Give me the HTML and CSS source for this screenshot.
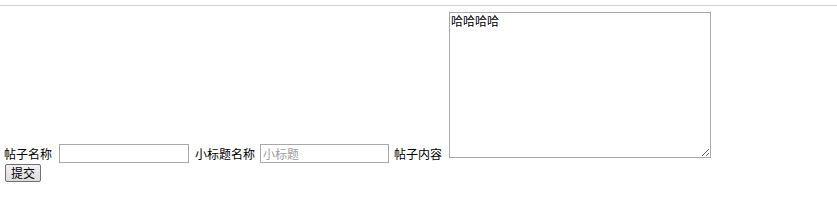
FILE: index.html
```html
<!DOCTYPE html>
<html lang="zh">
<head>
<meta charset="utf-8">
<title>发帖</title>
<link rel="stylesheet" href="styles.css">
</head>
<body>
<hr class="rule">
<form class="post-form">
  <div class="row">
    <span class="label l1">帖子名称</span>
    <input class="field f1" type="text">
    <span class="label l2">小标题名称</span>
    <input class="field f2" type="text" placeholder="小标题">
    <span class="label l3">帖子内容</span>
    <textarea class="content">哈哈哈哈</textarea>
  </div>
  <button class="submit" type="button">提交</button>
</form>
</body>
</html>
```
FILE: styles.css
```css
html, body {
  margin: 0;
  padding: 0;
  background: #fff;
}
body {
  font-family: "Noto Sans CJK SC", "Liberation Sans", sans-serif;
  font-size: 12px;
  color: #000;
}
.rule {
  margin: 5px 0 0 0;
  height: 0;
  border: 0;
  border-top: 1px solid #d0d0d0;
}
.post-form {
  margin-top: 6px;
  padding-left: 4px;
}
.row {
  display: flex;
  align-items: flex-end;
}
.label {
  height: 19px;
  line-height: 19px;
  white-space: nowrap;
  font-size: 12px;
}
.l1 { width: 48px; margin-right: 7px; }
.l2 { width: 60px; margin-left: 6px; margin-right: 5px; }
.l3 { width: 48px; margin-left: 5px; margin-right: 7px; }
.field {
  box-sizing: border-box;
  width: 130px;
  height: 19px;
  margin: 0;
  padding: 1px 2px;
  border: 1px solid #a9a9a9;
  font-family: "Noto Sans CJK SC", sans-serif;
  font-size: 12px;
  line-height: 15px;
  outline: none;
}
.f2 { width: 129px; }
.field::placeholder {
  color: #a0a0a0;
}
.content {
  box-sizing: border-box;
  width: 262px;
  height: 146px;
  margin: 0 0 5px 0;
  padding: 1px;
  border: 1px solid #a9a9a9;
  font-family: "Noto Sans CJK SC", sans-serif;
  font-size: 12px;
  line-height: 14px;
  color: #000;
}
.submit {
  display: block;
  box-sizing: border-box;
  width: 36px;
  height: 18px;
  margin: 1px 0 0 1px;
  padding: 0;
  border: 1px solid #707070;
  border-radius: 2px;
  background: linear-gradient(#f2f2f2, #dcdcdc);
  font-family: "Noto Sans CJK SC", sans-serif;
  font-size: 12px;
  line-height: 14px;
  color: #000;
}
```
